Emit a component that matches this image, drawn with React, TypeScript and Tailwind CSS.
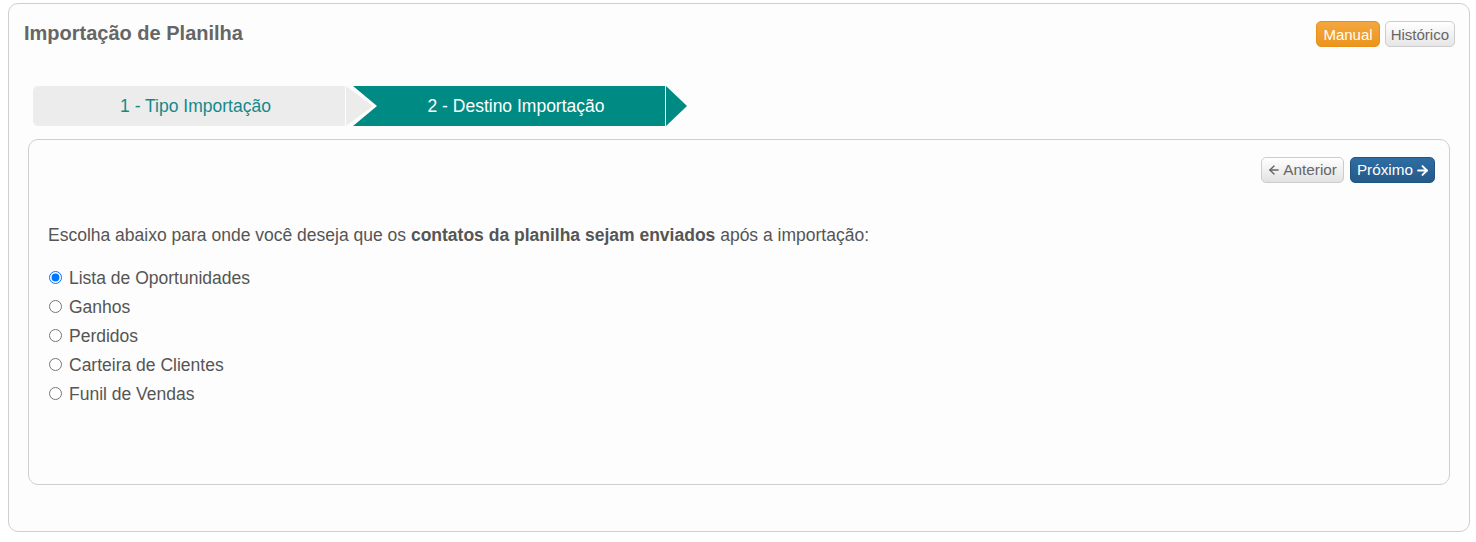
import { useState } from 'react';
import { ArrowLeft, ArrowRight } from 'lucide-react';

const destinos = [
  'Lista de Oportunidades',
  'Ganhos',
  'Perdidos',
  'Carteira de Clientes',
  'Funil de Vendas',
];

function Steps() {
  return (
    <div className="flex h-10 ml-6 mt-[38px]">
      {/* Step 1 */}
      <div className="w-[312px] h-10 bg-[#ececec] rounded-l-[5px] flex items-center justify-center pl-[13px] text-[17.5px] text-[#14898a]">
        1 - Tipo Importação
      </div>
      <div className="ml-px w-[27px] h-10 bg-[#ececec] relative z-10 [clip-path:polygon(0_0,100%_50%,0_100%)]" />
      {/* Step 2 */}
      <div className="-ml-[20px] w-[312px] h-10 bg-[#008a84] flex items-center justify-center pl-[14px] text-[17.5px] text-white [clip-path:polygon(0_0,100%_0,100%_100%,0_100%,24px_50%)]">
        2 - Destino Importação
      </div>
      <div className="ml-px w-[21px] h-10 bg-[#008a84] [clip-path:polygon(0_0,100%_50%,0_100%)]" />
    </div>
  );
}

export default function App() {
  const [destino, setDestino] = useState(destinos[0]);

  return (
    <div className="min-h-[542px] bg-white pt-[3px] font-['Liberation_Sans',Arial,sans-serif]">
      <div className="ml-2 w-[1462px] h-[529px] border border-[#cfcfcf] rounded-[10px] bg-[#fcfdfc]">
        {/* Header */}
        <div className="flex justify-between items-start pl-[15px] pr-[14px] pt-[17px] h-[44px]">
          <h1 className="text-[20px] leading-6 font-bold text-[#666]">Importação de Planilha</h1>
          <div className="flex gap-[5px]">
            <button className="h-[26px] px-[6px] rounded-[5px] border border-[#e8901a] bg-gradient-to-b from-[#f3a73d] to-[#ec951c] text-white text-[15px] leading-none">
              Manual
            </button>
            <button className="h-[26px] px-[5px] rounded-[5px] border border-[#cccccc] bg-gradient-to-b from-[#ffffff] to-[#e6e6e6] text-[#666] text-[15px] leading-none">
              Histórico
            </button>
          </div>
        </div>

        <Steps />

        {/* Conteúdo */}
        <div className="mx-[19px] mt-[13px] h-[346px] border border-[#cfcfcf] rounded-[10px] bg-[#fcfdfc] pt-[17px] pr-[14px] pl-[19px]">
          <div className="flex justify-end gap-[6px]">
            <button className="h-[26px] pl-[5px] pr-[6px] rounded-[5px] border border-[#cccccc] bg-gradient-to-b from-[#ffffff] to-[#e2e2e2] text-[#666] text-[15.3px] leading-none flex items-center">
              <ArrowLeft size={14} strokeWidth={2.5} className="mr-[2px]" />Anterior
            </button>
            <button className="h-[26px] pl-[6px] pr-[4px] rounded-[5px] border border-[#245580] bg-gradient-to-b from-[#2e6da4] to-[#265a88] text-white text-[15.3px] leading-none flex items-center">
              Próximo<ArrowRight size={15} strokeWidth={3.2} className="ml-[2px]" />
            </button>
          </div>

          <p className="mt-[40px] text-[17.5px] leading-6 text-[#555]">
            Escolha abaixo para onde você deseja que os <b>contatos da planilha sejam enviados</b> após a importação:
          </p>

          <div className="mt-[17px] flex flex-col">
            {destinos.map((d) => (
              <label key={d} className="flex items-center h-[29px] text-[17.5px] text-[#555] cursor-pointer">
                <input
                  type="radio"
                  name="destino"
                  checked={destino === d}
                  onChange={() => setDestino(d)}
                  className="m-0 ml-px w-[13px] h-[13px] mr-[7px] -mt-[2px]"
                />
                {d}
              </label>
            ))}
          </div>
        </div>
      </div>
    </div>
  );
}
